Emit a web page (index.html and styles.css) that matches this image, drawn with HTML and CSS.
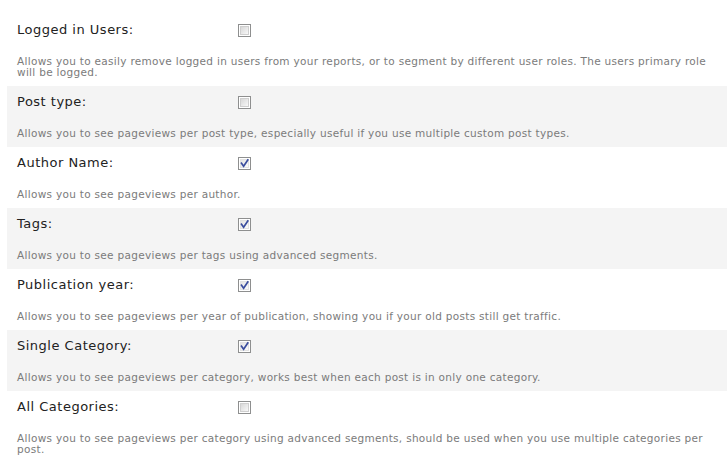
FILE: index.html
```html
<!DOCTYPE html>
<html>
<head>
<meta charset="utf-8">
<link rel="stylesheet" href="styles.css">
</head>
<body>
<div class="settings">
  <div class="row">
    <div class="head"><span class="label">Logged in Users:</span><span class="cb"></span></div>
    <div class="desc">Allows you to easily remove logged in users from your reports, or to segment by different user roles. The users primary role will be logged.</div>
  </div>
  <div class="row alt">
    <div class="head"><span class="label">Post type:</span><span class="cb"></span></div>
    <div class="desc">Allows you to see pageviews per post type, especially useful if you use multiple custom post types.</div>
  </div>
  <div class="row">
    <div class="head"><span class="label">Author Name:</span><span class="cb checked"><svg viewBox="0 0 13 13" width="13" height="13"><path d="M3.5 6.2 L5.6 9.2 L9.8 2.9" fill="none" stroke="#3a4d9e" stroke-width="1.7" stroke-linecap="square"/></svg></span></div>
    <div class="desc">Allows you to see pageviews per author.</div>
  </div>
  <div class="row alt">
    <div class="head"><span class="label">Tags:</span><span class="cb checked"><svg viewBox="0 0 13 13" width="13" height="13"><path d="M3.5 6.2 L5.6 9.2 L9.8 2.9" fill="none" stroke="#3a4d9e" stroke-width="1.7" stroke-linecap="square"/></svg></span></div>
    <div class="desc">Allows you to see pageviews per tags using advanced segments.</div>
  </div>
  <div class="row">
    <div class="head"><span class="label">Publication year:</span><span class="cb checked"><svg viewBox="0 0 13 13" width="13" height="13"><path d="M3.5 6.2 L5.6 9.2 L9.8 2.9" fill="none" stroke="#3a4d9e" stroke-width="1.7" stroke-linecap="square"/></svg></span></div>
    <div class="desc">Allows you to see pageviews per year of publication, showing you if your old posts still get traffic.</div>
  </div>
  <div class="row alt">
    <div class="head"><span class="label">Single Category:</span><span class="cb checked"><svg viewBox="0 0 13 13" width="13" height="13"><path d="M3.5 6.2 L5.6 9.2 L9.8 2.9" fill="none" stroke="#3a4d9e" stroke-width="1.7" stroke-linecap="square"/></svg></span></div>
    <div class="desc">Allows you to see pageviews per category, works best when each post is in only one category.</div>
  </div>
  <div class="row">
    <div class="head"><span class="label">All Categories:</span><span class="cb"></span></div>
    <div class="desc">Allows you to see pageviews per category using advanced segments, should be used when you use multiple categories per post.</div>
  </div>
</div>
</body>
</html>
```
FILE: styles.css
```css
html, body {
  margin: 0;
  padding: 0;
  background: #fff;
}
body {
  font-family: "DejaVu Sans", Verdana, sans-serif;
}
.settings {
  margin-left: 7px;
  padding-top: 14px;
}
.row {
  padding: 8px 10px 8px 10px;
}
.row.alt {
  background: #f4f4f4;
}
.head {
  display: flex;
  align-items: flex-start;
  height: 16px;
}
.label {
  width: 221px;
  font-size: 13px;
  line-height: 16px;
  letter-spacing: 0.5px;
  color: #222;
}
.cb {
  position: relative;
  box-sizing: border-box;
  width: 13px;
  height: 13px;
  margin-top: 2px;
  border: 1px solid #8e8f8f;
  background: #fff;
}
.cb::before {
  content: "";
  position: absolute;
  left: 1px;
  top: 1px;
  width: 7px;
  height: 7px;
  border: 1px solid #cfcfcf;
  background: linear-gradient(135deg, #d8d8d8, #f8f8f8);
}
.cb.checked::before {
  border-color: #e2e2e2;
  background: linear-gradient(135deg, #e4e4e4, #fbfbfb);
}
.cb svg {
  position: absolute;
  left: -1px;
  top: -1px;
}
.desc {
  margin-top: 18px;
  font-size: 10.5px;
  line-height: 11px;
  letter-spacing: 0.3px;
  color: #7b7b7b;
}
```
